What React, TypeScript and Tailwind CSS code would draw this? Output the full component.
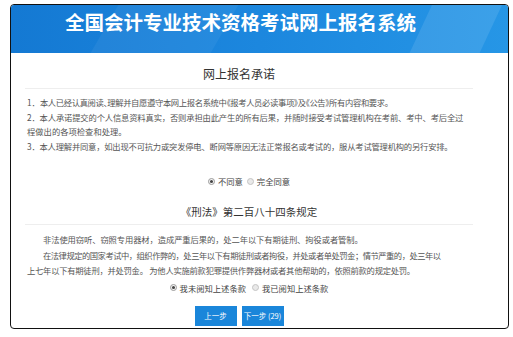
import React from "react";

const font = { fontFamily: '"Noto Sans CJK SC", "Noto Sans", sans-serif' };

function Radio({ checked, label }: { checked: boolean; label: string }) {
  return (
    <span className="inline-flex items-center gap-[3px]">
      {checked ? (
        <span className="flex h-[7px] w-[7px] items-center justify-center rounded-full border border-[#9a9a9a] bg-[#f4f4f4]">
          <span className="h-[3px] w-[3px] rounded-full bg-[#444]" />
        </span>
      ) : (
        <span className="h-[7px] w-[7px] rounded-full border border-[#c4c4c4] bg-[#e9e9e9]" />
      )}
      <span>{label}</span>
    </span>
  );
}

export default function App() {
  return (
    <div className="min-h-[337px] w-[513px] bg-white pl-[10px] pt-[4px]" style={font}>
      <div className="w-[499px] h-[325px] overflow-hidden rounded-[4px] border border-[#111] bg-white">
        <div className="relative h-[48px] overflow-hidden bg-gradient-to-r from-[#1479d3] via-[#1c87de] to-[#2696e6]">
          <div className="absolute left-[90px] top-[-10px] h-[80px] w-[120px] -skew-x-[30deg] bg-white/5" />
          <div className="absolute right-[20px] top-[-10px] h-[80px] w-[70px] -skew-x-[25deg] bg-white/10" />
          <div className="relative pl-[54px] pt-[5px] text-[19.5px] font-bold leading-[24px] text-white">
            全国会计专业技术资格考试网上报名系统
          </div>
        </div>

        <div className="ml-[14px] w-[448px]">
          <div className="mt-[13px] pr-[20px] text-center text-[12px] leading-[16px] text-[#333]">
            网上报名承诺
          </div>
          <div className="mt-[6px] border-t border-[#eeeeee]" />
          <div className="mt-[6px] pl-[2px] text-[8.3px] leading-[14.5px] text-[#555] whitespace-nowrap">
            <div>
              1．<span className="tracking-[-0.35px] [font-feature-settings:'palt']">本人已经认真阅读、理解并自愿遵守本网上报名系统中《报考人员必读事项》及《公告》所有内容和要求。</span>
            </div>
            <div className="tracking-[-0.15px]">2．本人承诺提交的个人信息资料真实，否则承担由此产生的所有后果，并随时接受考试管理机构在考前、考中、考后全过</div>
            <div>程做出的各项检查和处理。</div>
            <div className="tracking-[-0.2px]">3．本人理解并同意，如出现不可抗力或突发停电、断网等原因无法正常报名或考试的，服从考试管理机构的另行安排。</div>
          </div>
          <div className="mt-[21px] flex justify-center gap-[4px] text-[8.3px] leading-[14px] text-[#444]">
            <Radio checked label="不同意" />
            <Radio checked={false} label="完全同意" />
          </div>
          <div className="mt-[16px] text-center text-[10.5px] leading-[16px] text-[#333]">
            《刑法》第二百八十四条规定
          </div>
          <div className="mt-[4px] border-t border-[#eeeeee]" />
          <div className="mt-[7px] pl-[2px] text-[8.3px] leading-[15.5px] text-[#555] whitespace-nowrap">
            <div className="pl-[16px] tracking-[-0.1px]">非法使用窃听、窃照专用器材，造成严重后果的，处二年以下有期徒刑、拘役或者管制。</div>
            <div className="pl-[16px] tracking-[-0.5px]">在法律规定的国家考试中，组织作弊的，处三年以下有期徒刑或者拘役，并处或者单处罚金；情节严重的，处三年以</div>
            <div className="tracking-[-0.25px]">上七年以下有期徒刑，并处罚金。 为他人实施前款犯罪提供作弊器材或者其他帮助的，依照前款的规定处罚。</div>
          </div>
          <div className="mt-[2px] flex justify-center gap-[6px] text-[8.3px] leading-[14px] text-[#444]">
            <Radio checked label="我未阅知上述条款" />
            <Radio checked={false} label="我已阅知上述条款" />
          </div>
          <div className="mt-[11px] flex justify-center gap-[5px] pr-[20px]">
            <button className="flex h-[20px] w-[42px] items-center justify-center bg-[#1a86da] text-[7.5px] text-white">
              上一步
            </button>
            <button className="flex h-[20px] w-[42px] items-center justify-center bg-[#1a86da] text-[7.5px] text-white">
              下一步 (29)
            </button>
          </div>
        </div>
      </div>
    </div>
  );
}
